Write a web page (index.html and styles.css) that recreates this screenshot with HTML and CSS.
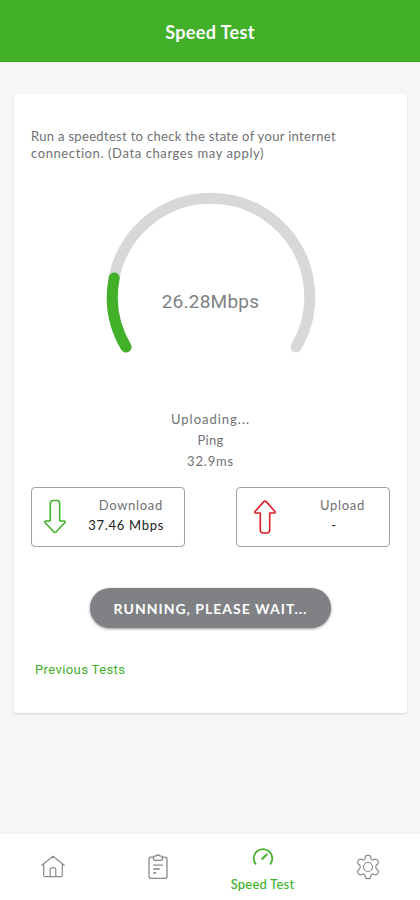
FILE: index.html
```
<!DOCTYPE html>
<html lang="en">
<head>
    <meta charset="UTF-8">
    <meta name="viewport" content="width=device-width, initial-scale=1">
    <title>Speed Test</title>
    <link rel="stylesheet" href="styles.css">
</head>
<body>
    <header class="header">
        <h1 class="title">Speed Test</h1>
    </header>

    <main class="content">
        <section class="card">
            <p class="intro">Run a speedtest to check the state of your internet<br><span class="note">connection. (Data charges may apply)</span></p>

            <div class="gauge">
                <svg width="210" height="162" viewBox="0 0 210 162" fill="none" stroke-width="11" stroke-linecap="round">
                    <path d="M20 155A98.7 98.7 0 1 1 190 155" stroke="#d8d8d8"/>
                    <path d="M20 155A98.7 98.7 0 0 1 8.2 86" stroke="#42b029"/>
                </svg>
                <span class="gauge-value">26.28Mbps</span>
            </div>

            <div class="status">
                <p class="state">Uploading...</p>
                <p class="ping">Ping</p>
                <p class="ms">32.9ms</p>
            </div>

            <div class="results">
                <div class="result">
                    <svg class="arrow" width="24" height="36" viewBox="0 0 24 36" fill="none" stroke="#42b029" stroke-width="1.6" stroke-linejoin="round">
                        <path d="M7.3 22V4.5Q7.3 1.5 10.3 1.5H13.7Q16.7 1.5 16.7 4.5V22H21.2Q22.9 22.3 21.8 23.7L13.2 32.8Q12 33.9 10.8 32.8L2.2 23.7Q1.1 22.3 2.8 22Z"/>
                    </svg>
                    <div class="result-text">
                        <p class="label">Download</p>
                        <p class="value">37.46 Mbps</p>
                    </div>
                </div>
                <div class="result upload">
                    <svg class="arrow" width="24" height="36" viewBox="0 0 24 36" fill="none" stroke="#dc1f26" stroke-width="1.6" stroke-linejoin="round">
                        <path d="M7.3 14V31Q7.3 34 10.3 34H13.7Q16.7 34 16.7 31V14H21.2Q22.9 13.7 21.8 12.3L13.2 2.6Q12 1.5 10.8 2.6L2.2 12.3Q1.1 13.7 2.8 14Z"/>
                    </svg>
                    <div class="result-text">
                        <p class="label">Upload</p>
                        <p class="value">-</p>
                    </div>
                </div>
            </div>

            <button class="btn" disabled>RUNNING, PLEASE WAIT...</button>

            <a class="previous" href="#">Previous Tests</a>
        </section>
    </main>

    <nav class="tabs">
        <a class="tab" href="#" aria-label="Home">
            <svg width="26" height="26" viewBox="0 0 26 26" fill="none" stroke="#8a8a8a" stroke-width="1.2" stroke-linecap="round" stroke-linejoin="round">
                <path d="M1.7 11.2L13 2.2L24.3 11.2M3.7 9.8V21.2Q3.7 22.7 5.2 22.7H20.8Q22.3 22.7 22.3 21.2V9.8M10.2 22.5V15.7Q10.2 13.7 13 13.7Q15.8 13.7 15.8 15.7V22.5"/>
            </svg>
        </a>
        <a class="tab" href="#" aria-label="Reports">
            <svg width="26" height="26" viewBox="0 0 26 26" fill="none" stroke="#8a8a8a" stroke-width="1.3" stroke-linecap="round" stroke-linejoin="round">
                <path d="M8.5 3.2H6.2Q4 3.2 4 5.4V22.2Q4 24.4 6.2 24.4H19.8Q22 24.4 22 22.2V5.4Q22 3.2 19.8 3.2H17.5"/>
                <path d="M10.8 2.2Q11 1 13 1Q15 1 15.2 2.2H16.5Q17.5 2.2 17.5 3.2V5Q17.5 6.3 16.5 6.3H9.5Q8.5 6.3 8.5 5V3.2Q8.5 2.2 9.5 2.2Z"/>
                <path d="M8.5 11.2H17.3M8.5 15H14.3M8.5 19H10.8"/>
            </svg>
        </a>
        <a class="tab active" href="#">
            <svg width="24" height="20" viewBox="0 0 24 20" fill="none" stroke="#42b029" stroke-width="1.8">
                <path d="M5 17.5A9.3 9.3 0 1 1 19 17.5"/>
                <path d="M15.8 7.5L11.2 12" stroke-width="2" stroke-linecap="round"/>
            </svg>
            <span>Speed Test</span>
        </a>
        <a class="tab" href="#" aria-label="Settings">
            <svg width="26" height="26" viewBox="0 0 26 26" fill="none" stroke="#8a8a8a" stroke-width="1.2" stroke-linejoin="round">
                <path d="M10.1 4.7L10.5 2.5Q10.8 1.3 12 1.3H14Q15.2 1.3 15.5 2.5L15.9 4.7Q16.3 6.2 18.2 5.9L20.3 5.1Q21.5 4.7 22.1 5.7L23.3 7.8Q23.9 8.9 23 9.7L21.2 11.2Q20.2 13 21.2 14.8L23 16.3Q23.9 17.1 23.3 18.2L22.1 20.3Q21.5 21.3 20.3 20.9L18.2 20.1Q16.3 19.8 15.9 21.3L15.5 23.5Q15.2 24.7 14 24.7H12Q10.8 24.7 10.5 23.5L10.1 21.3Q9.7 19.8 7.8 20.1L5.7 20.9Q4.5 21.3 3.9 20.3L2.7 18.2Q2.1 17.1 3 16.3L4.8 14.8Q5.8 13 4.8 11.2L3 9.7Q2.1 8.9 2.7 7.8L3.9 5.7Q4.5 4.7 5.7 5.1L7.8 5.9Q9.7 6.2 10.1 4.7Z"/>
                <circle cx="13" cy="13" r="4.5"/>
            </svg>
        </a>
    </nav>
</body>
</html>
```
FILE: styles.css
```
:root {
    --primary-color: #42b029;
    --background-color: #f6f6f6;
    --text-color: #707173;
}
* {
    margin: 0;
    padding: 0;
    box-sizing: border-box;
}
body {
    font-family: Lato, 'Liberation Sans', sans-serif;
    background-color: var(--background-color);
    color: var(--text-color);
    display: flex;
    flex-direction: column;
    height: 900px;
    overflow: hidden;
}
.header {
    height: 62px;
    background-color: var(--primary-color);
    border-bottom: 1px solid #35a512;
    display: flex;
    align-items: center;
    justify-content: center;
    padding-top: 3px;
}
.title {
    font-size: 18px;
    font-weight: 700;
    letter-spacing: 0.35px;
    color: #fff;
}
.content {
    flex: 1;
    padding: 32px 13px 0 14px;
}
.card {
    height: 619px;
    padding: 34px 17px 0;
    background-color: #fff;
    border-radius: 3px;
    box-shadow: 0 1px 2px rgba(0,0,0,0.14);
    display: flex;
    flex-direction: column;
}
.intro {
    font-size: 13px;
    line-height: 17px;
    letter-spacing: 0.32px;
    white-space: nowrap;
}
.note {
    letter-spacing: 0.6px;
}
.gauge {
    display: grid;
    place-items: center;
    margin-top: 30px;
    height: 162px;
}
.gauge svg,
.gauge-value {
    grid-area: 1 / 1;
}
.gauge-value {
    font-family: Roboto, sans-serif;
    font-size: 19px;
    letter-spacing: 0.25px;
    color: #808184;
    padding-top: 57px;
}
.status {
    margin-top: 55px;
    text-align: center;
    font-size: 13px;
    line-height: 21px;
    letter-spacing: 0.8px;
}
.state {
    letter-spacing: 1px;
}
.ping {
    letter-spacing: 0.3px;
}
.results {
    display: flex;
    justify-content: space-between;
    margin-top: 15px;
}
.result {
    width: 154px;
    height: 60px;
    border: 1px solid #a0a0a0;
    border-radius: 4px;
    display: flex;
    padding: 11px 20px 0 11px;
    justify-content: space-between;
}
.upload {
    padding: 11px 23px 0 16px;
}
.result-text {
    font-size: 13px;
    line-height: 20px;
    letter-spacing: 0.7px;
    margin-top: -4px;
    text-align: right;
    white-space: nowrap;
}
.label {
    padding-right: 1px;
}
.upload .result-text {
    text-align: center;
}
.value {
    color: #222;
}
.upload .value {
    padding-right: 18px;
}
.btn {
    align-self: center;
    width: 241px;
    height: 40px;
    margin-top: 41px;
    border: none;
    border-radius: 20px;
    background-color: #808184;
    box-shadow: 0 1px 3px rgba(0,0,0,0.4);
    color: #fff;
    font-family: inherit;
    font-size: 14px;
    font-weight: 700;
    letter-spacing: 1px;
    white-space: nowrap;
}
.previous {
    align-self: flex-start;
    margin: 34px 0 0 4px;
    font-family: Roboto, sans-serif;
    font-size: 13px;
    line-height: 16px;
    letter-spacing: 0.4px;
    color: var(--primary-color);
    text-decoration: none;
}
.tabs {
    height: 66px;
    background-color: #fff;
    box-shadow: 0 -1px 2px rgba(0,0,0,0.04);
    display: grid;
    grid-template-columns: repeat(4, 1fr);
}
.tab {
    display: flex;
    flex-direction: column;
    align-items: center;
    justify-content: center;
    color: var(--primary-color);
    text-decoration: none;
    font-size: 13px;
    line-height: 17px;
}
.active {
    justify-content: flex-start;
    padding-top: 13px;
}
.active span {
    margin-top: 9px;
    letter-spacing: 0.2px;
    font-weight: 500;
}
```
